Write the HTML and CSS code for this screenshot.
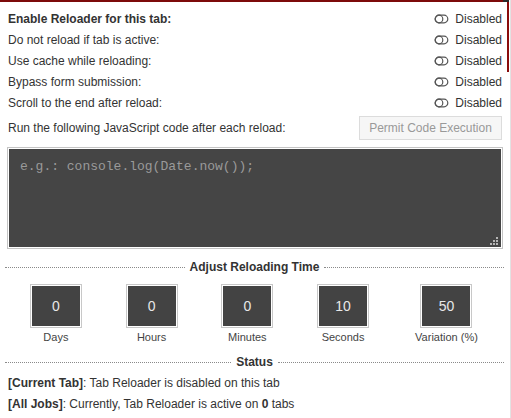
FILE: index.html
```html
<!DOCTYPE html>
<html>
<head>
<meta charset="utf-8">
<link rel="stylesheet" href="styles.css">
</head>
<body>
<div class="topbar"></div>
<div class="edge"></div>
<main class="panel">
  <div class="row"><span class="label bold">Enable Reloader for this tab:</span><span class="state"><svg class="toggle" viewBox="0 0 15 10" width="15" height="10"><path d="M5 1.2 H10 A3.8 3.8 0 0 1 10 8.8 H5 A3.8 3.8 0 0 1 5 1.2 Z" fill="none" stroke="#555" stroke-width="1.2"/><circle cx="5" cy="5" r="3.8" fill="none" stroke="#555" stroke-width="1.2"/></svg>Disabled</span></div>
  <div class="row"><span class="label">Do not reload if tab is active:</span><span class="state"><svg class="toggle" viewBox="0 0 15 10" width="15" height="10"><path d="M5 1.2 H10 A3.8 3.8 0 0 1 10 8.8 H5 A3.8 3.8 0 0 1 5 1.2 Z" fill="none" stroke="#555" stroke-width="1.2"/><circle cx="5" cy="5" r="3.8" fill="none" stroke="#555" stroke-width="1.2"/></svg>Disabled</span></div>
  <div class="row"><span class="label">Use cache while reloading:</span><span class="state"><svg class="toggle" viewBox="0 0 15 10" width="15" height="10"><path d="M5 1.2 H10 A3.8 3.8 0 0 1 10 8.8 H5 A3.8 3.8 0 0 1 5 1.2 Z" fill="none" stroke="#555" stroke-width="1.2"/><circle cx="5" cy="5" r="3.8" fill="none" stroke="#555" stroke-width="1.2"/></svg>Disabled</span></div>
  <div class="row"><span class="label">Bypass form submission:</span><span class="state"><svg class="toggle" viewBox="0 0 15 10" width="15" height="10"><path d="M5 1.2 H10 A3.8 3.8 0 0 1 10 8.8 H5 A3.8 3.8 0 0 1 5 1.2 Z" fill="none" stroke="#555" stroke-width="1.2"/><circle cx="5" cy="5" r="3.8" fill="none" stroke="#555" stroke-width="1.2"/></svg>Disabled</span></div>
  <div class="row"><span class="label">Scroll to the end after reload:</span><span class="state"><svg class="toggle" viewBox="0 0 15 10" width="15" height="10"><path d="M5 1.2 H10 A3.8 3.8 0 0 1 10 8.8 H5 A3.8 3.8 0 0 1 5 1.2 Z" fill="none" stroke="#555" stroke-width="1.2"/><circle cx="5" cy="5" r="3.8" fill="none" stroke="#555" stroke-width="1.2"/></svg>Disabled</span></div>
  <div class="row row-code"><span class="label">Run the following JavaScript code after each reload:</span><button class="permit" type="button">Permit Code Execution</button></div>
  <div class="code-wrap">
    <textarea class="code" placeholder="e.g.: console.log(Date.now());"></textarea>
    <span class="grip"><i></i><i></i><i></i><i></i><i></i><i></i></span>
  </div>
  <div class="section-title"><span>Adjust Reloading Time</span></div>
  <div class="timers">
    <div class="timer"><div class="box">0</div><div class="cap">Days</div></div>
    <div class="timer"><div class="box">0</div><div class="cap">Hours</div></div>
    <div class="timer"><div class="box">0</div><div class="cap">Minutes</div></div>
    <div class="timer"><div class="box">10</div><div class="cap">Seconds</div></div>
    <div class="timer"><div class="box">50</div><div class="cap">Variation (%)</div></div>
  </div>
  <div class="section-title status-title"><span>Status</span></div>
  <div class="status">
    <div class="line"><b>[Current Tab]</b>: Tab Reloader is disabled on this tab</div>
    <div class="line"><b>[All Jobs]</b>: Currently, Tab Reloader is active on <b>0</b> tabs</div>
  </div>
</main>
</body>
</html>
```

FILE: styles.css
```css
html, body {
  margin: 0;
  padding: 0;
  background: #fff;
}
body {
  position: relative;
  width: 511px;
  height: 418px;
  overflow: hidden;
  font-family: "Liberation Sans", Arial, sans-serif;
  font-size: 12px;
  color: #333;
  border-right: 1px solid #e2e2e2;
  box-sizing: border-box;
}
.topbar {
  height: 2px;
  width: 503px;
  background: #7d0a0a;
}
.edge {
  position: absolute;
  right: 1px;
  top: 0;
  width: 2px;
  height: 72px;
  background: #8a0c0c;
}
.edge::before {
  content: "";
  position: absolute;
  right: 0;
  top: 0;
  width: 6px;
  height: 2px;
  background: #2a2a2a;
}
.panel {
  padding: 6px 8px 0 8px;
  display: flex;
  flex-direction: column;
}
.row {
  display: flex;
  align-items: center;
  justify-content: space-between;
  height: 21px;
}
.bold { font-weight: bold; }
.state {
  display: flex;
  align-items: center;
  gap: 6px;
  color: #333;
}
.toggle { display: block; }
.row-code {
  height: 29px;
}
.permit {
  height: 24px;
  width: 143px;
  padding: 0;
  border: 1px solid #dcdcdc;
  background: #f6f6f6;
  color: #999;
  font-family: "Liberation Sans", Arial, sans-serif;
  font-size: 12px;
  border-radius: 0;
}
.code-wrap {
  position: relative;
  margin-top: 6px;
  height: 100px;
}
.code {
  display: block;
  box-sizing: border-box;
  width: 100%;
  height: 100%;
  margin: 0;
  resize: none;
  background: #454545;
  border: 1px solid #fff;
  box-shadow: 0 0 0 1px #c4c4c4;
  padding: 10px 11px;
  font-family: "Liberation Mono", "Courier New", monospace;
  font-size: 13px;
  color: #ddd;
  outline: none;
}
.code::placeholder {
  color: #9a9a9a;
}
.grip {
  position: absolute;
  right: 4px;
  bottom: 3px;
  width: 8px;
  height: 8px;
  display: grid;
  grid-template-columns: repeat(3, 2px);
  grid-template-rows: repeat(3, 2px);
  gap: 1px;
}
.grip i {
  display: block;
  width: 2px;
  height: 2px;
  background: #b5b5b5;
}
.grip i:nth-child(1) { grid-column: 3; grid-row: 1; }
.grip i:nth-child(2) { grid-column: 2; grid-row: 2; }
.grip i:nth-child(3) { grid-column: 3; grid-row: 2; }
.grip i:nth-child(4) { grid-column: 1; grid-row: 3; }
.grip i:nth-child(5) { grid-column: 2; grid-row: 3; }
.grip i:nth-child(6) { grid-column: 3; grid-row: 3; }
.section-title {
  display: flex;
  align-items: center;
  gap: 5px;
  margin: 11px -2px 0 -3px;
  height: 16px;
  font-weight: bold;
  font-size: 12px;
  color: #333;
}
.section-title::before,
.section-title::after {
  content: "";
  flex: 1;
  border-top: 1px dotted #8a8a8a;
}
.timers {
  display: grid;
  grid-template-columns: 50fr 50fr 50fr 50fr 58fr;
  margin-top: 10px;
}
.timer {
  display: flex;
  flex-direction: column;
  align-items: center;
}
.box {
  box-sizing: border-box;
  width: 50px;
  height: 42px;
  background: #434343;
  border: 1px solid #fff;
  box-shadow: 0 0 0 1px #c8c8c8;
  color: #e8e8e8;
  font-size: 14px;
  display: flex;
  align-items: center;
  justify-content: center;
}
.cap {
  margin-top: 4px;
  font-size: 11px;
  line-height: 13px;
  color: #444;
}
.status-title {
  margin-top: 10px;
}
.status {
  margin-top: 3px;
}
.line {
  height: 21px;
  line-height: 21px;
}
```
